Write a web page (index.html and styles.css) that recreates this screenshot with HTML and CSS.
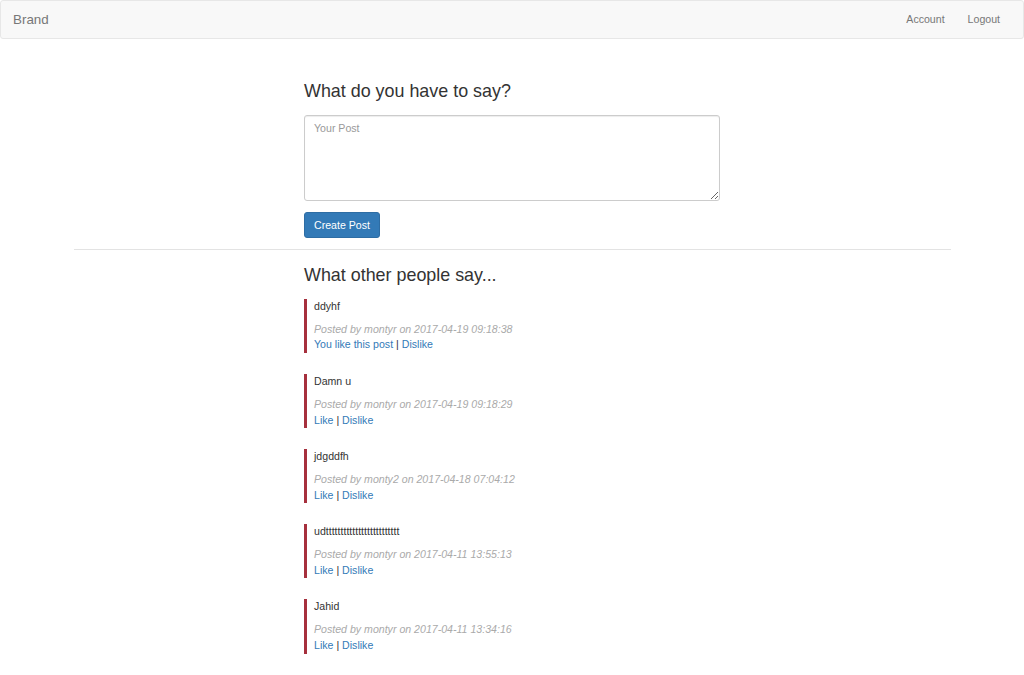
FILE: index.html
```html
<!DOCTYPE html>
<html>
<head>
<meta charset="utf-8">
<title>Posts</title>
<link rel="stylesheet" href="styles.css">
</head>
<body>
<nav class="navbar">
  <a class="brand" href="#">Brand</a>
  <ul class="nav-links">
    <li><a href="#">Account</a></li>
    <li><a href="#">Logout</a></li>
  </ul>
</nav>
<main class="container">
  <section class="column">
    <h3 class="heading">What do you have to say?</h3>
    <form class="post-form">
      <textarea class="post-input" placeholder="Your Post"></textarea>
      <button type="button" class="btn-primary">Create Post</button>
    </form>
  </section>
  <hr class="divider">
  <section class="column">
    <h3 class="heading">What other people say...</h3>
    <article class="post">
      <p class="post-body">ddyhf</p>
      <div class="info">Posted by montyr on 2017-04-19 09:18:38</div>
      <div class="actions"><a href="#">You like this post</a> | <a href="#">Dislike</a></div>
    </article>
    <article class="post">
      <p class="post-body">Damn u</p>
      <div class="info">Posted by montyr on 2017-04-19 09:18:29</div>
      <div class="actions"><a href="#">Like</a> | <a href="#">Dislike</a></div>
    </article>
    <article class="post">
      <p class="post-body">jdgddfh</p>
      <div class="info">Posted by monty2 on 2017-04-18 07:04:12</div>
      <div class="actions"><a href="#">Like</a> | <a href="#">Dislike</a></div>
    </article>
    <article class="post">
      <p class="post-body">udttttttttttttttttttttttttt</p>
      <div class="info">Posted by montyr on 2017-04-11 13:55:13</div>
      <div class="actions"><a href="#">Like</a> | <a href="#">Dislike</a></div>
    </article>
    <article class="post">
      <p class="post-body">Jahid</p>
      <div class="info">Posted by montyr on 2017-04-11 13:34:16</div>
      <div class="actions"><a href="#">Like</a> | <a href="#">Dislike</a></div>
    </article>
  </section>
</main>
</body>
</html>
```

FILE: styles.css
```css
* { box-sizing: border-box; }
html, body { margin: 0; padding: 0; }
body {
  font-family: "Liberation Sans", Arial, Helvetica, sans-serif;
  font-size: 10.6px;
  line-height: 15.7px;
  color: #333;
  background: #fff;
}
a { color: #337ab7; text-decoration: none; }

.navbar {
  display: flex;
  align-items: center;
  justify-content: space-between;
  height: 39px;
  background: #f8f8f8;
  border: 1px solid #e7e7e7;
  border-radius: 3px;
  padding: 0 11.5px 0 12px;
}
.brand {
  color: #777;
  font-size: 13.4px;
  line-height: 20px;
}
.nav-links {
  display: flex;
  list-style: none;
  margin: 0;
  padding: 0;
}
.nav-links a {
  display: block;
  color: #777;
  padding: 0 11.5px;
  line-height: 37px;
}
.nav-links li:last-child a { padding-right: 11.5px; }

.container {
  width: 877px;
  margin: 0 auto;
}
.column {
  width: 416px;
  margin: 0 auto;
}
.heading {
  font-size: 17.9px;
  font-weight: 500;
  line-height: 20.5px;
  margin: 0;
  color: #333;
}
.column:first-child .heading { margin-top: 42px; }
.post-form { margin-top: 13px; }
.post-input {
  display: block;
  width: 416px;
  height: 86px;
  border: 1px solid #ccc;
  border-radius: 3px;
  padding: 5px 9px;
  font-family: inherit;
  font-size: 10.6px;
  line-height: 15.7px;
  color: #555;
  box-shadow: inset 0 1px 1px rgba(0,0,0,.075);
  resize: vertical;
}
.post-input::placeholder { color: #999; }
.btn-primary {
  display: block;
  margin-top: 11px;
  height: 26px;
  padding: 0 9px;
  background: #337ab7;
  border: 1px solid #2e6da4;
  border-radius: 3px;
  color: #fff;
  font-family: inherit;
  font-size: 10.6px;
}
.divider {
  margin: 11px 0 0;
  border: 0;
  border-top: 1px solid #e3e3e3;
  height: 0;
}
.divider + .column .heading { margin-top: 15px; margin-bottom: 14px; }

.post {
  border-left: 3px solid #a6303d;
  padding-left: 7px;
  margin-bottom: 21px;
}
.post-body {
  margin: 0 0 7px;
  color: #333;
}
.info {
  color: #aaa;
  font-style: italic;
}
.actions { color: #333; }
```
